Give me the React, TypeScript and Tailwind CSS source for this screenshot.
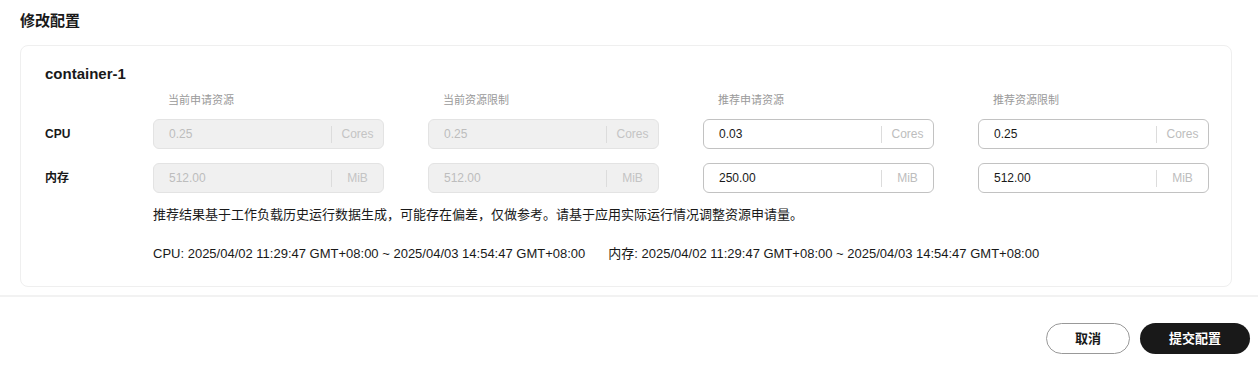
const font = { fontFamily: '"Liberation Sans", Arial, "Noto Sans CJK SC", sans-serif' };

type Field = { value: string; unit: string; disabled?: boolean };

const headers = ["当前申请资源", "当前资源限制", "推荐申请资源", "推荐资源限制"];

const rows: { label: string; fields: Field[] }[] = [
  {
    label: "CPU",
    fields: [
      { value: "0.25", unit: "Cores", disabled: true },
      { value: "0.25", unit: "Cores", disabled: true },
      { value: "0.03", unit: "Cores" },
      { value: "0.25", unit: "Cores" },
    ],
  },
  {
    label: "内存",
    fields: [
      { value: "512.00", unit: "MiB", disabled: true },
      { value: "512.00", unit: "MiB", disabled: true },
      { value: "250.00", unit: "MiB" },
      { value: "512.00", unit: "MiB" },
    ],
  },
];

function UnitInput({ value, unit, disabled }: Field) {
  return (
    <div
      className={`flex items-center h-[30px] rounded-md border ${
        disabled ? "bg-[#f0f0f0] border-[#e3e3e3]" : "bg-white border-[#c2c2c2]"
      }`}
    >
      <span className={`flex-1 pl-[15px] text-[12px] ${disabled ? "text-[#bdbdbd]" : "text-[#191919]"}`}>
        {value}
      </span>
      <span className="h-[17px] w-px bg-[#dcdcdc]" />
      <span className={`w-[51px] text-center text-[12px] ${disabled ? "text-[#c4c4c4]" : "text-[#bdbdbd]"}`}>
        {unit}
      </span>
    </div>
  );
}

export default function App() {
  return (
    <div className="w-[1258px] h-[372px] bg-white text-[#191919]" style={font}>
      <div className="px-5 pt-[12px]">
        <h2 className="text-[15px] font-bold leading-[17px]">修改配置</h2>

        {/* Container card */}
        <div className="mt-[16px] w-[1212px] h-[242px] rounded-lg border border-[#efefef] pl-6 pt-[19px]">
          <div className="text-[15px] font-bold leading-[17px]">container-1</div>

          <div className="mt-[11px] grid grid-cols-[64px_231px_231px_231px_231px] gap-x-[44px]">
            <div />
            {headers.map((h) => (
              <div key={h} className="pl-[15px] text-[11px] leading-[14px] text-[#9a9a9a]">
                {h}
              </div>
            ))}
          </div>

          <div className="mt-[12px] flex flex-col gap-[14px]">
            {rows.map((row) => (
              <div
                key={row.label}
                className="grid grid-cols-[64px_231px_231px_231px_231px] gap-x-[44px] items-center"
              >
                <div className="text-[12px] font-bold text-[#191919]">{row.label}</div>
                {row.fields.map((f, i) => (
                  <UnitInput key={i} {...f} />
                ))}
              </div>
            ))}
          </div>

          <div className="ml-[108px] mt-[14px] text-[13px] leading-[15px] text-[#191919]">
            推荐结果基于工作负载历史运行数据生成，可能存在偏差，仅做参考。请基于应用实际运行情况调整资源申请量。
          </div>
          <div className="ml-[108px] mt-[24px] text-[13px] leading-[15px] text-[#191919]">
            CPU: 2025/04/02 11:29:47 GMT+08:00 ~ 2025/04/03 14:54:47 GMT+08:00
            <span className="ml-[23px]">内存: 2025/04/02 11:29:47 GMT+08:00 ~ 2025/04/03 14:54:47 GMT+08:00</span>
          </div>
        </div>
      </div>

      <div className="mt-[8px] h-[2px] bg-[#f2f2f2]" />

      <div className="flex justify-end gap-[10px] pr-2 pt-[26px]">
        <button className="h-[31px] w-[84px] rounded-full border border-[#999] bg-white text-[13px] font-bold text-[#191919]">
          取消
        </button>
        <button className="h-[31px] w-[110px] rounded-full bg-[#191919] text-[13px] font-bold text-white">
          提交配置
        </button>
      </div>
    </div>
  );
}
